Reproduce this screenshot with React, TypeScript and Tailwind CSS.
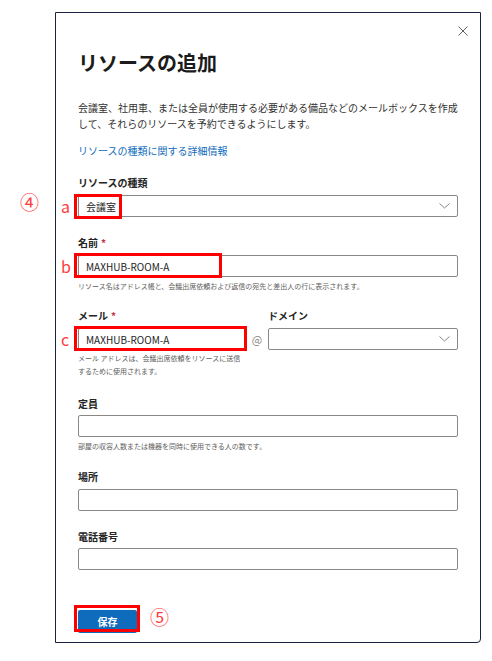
const jp = "font-['Noto_Sans_CJK_JP','Noto_Sans',sans-serif]";

function Chevron() {
  return (
    <svg width="11" height="6" viewBox="0 0 11 6" className="text-[#8a8886]">
      <path d="M0.5 0.5 L5.5 5 L10.5 0.5" fill="none" stroke="currentColor" strokeWidth="1" />
    </svg>
  );
}

function Mark({ className }: { className: string }) {
  // red annotation frame drawn over a field
  return <div className={`absolute border-[3px] border-[#ff0000] pointer-events-none ${className}`} />;
}

function Letter({ ch }: { ch: string }) {
  return <div className="absolute -left-[17px] top-[1px] text-[16px] leading-[20px] text-[#ff3b3b]">{ch}</div>;
}

function Label({ text, required, className = "" }: { text: string; required?: boolean; className?: string }) {
  return (
    <div className={`h-[16px] leading-[16px] text-[10px] font-semibold text-[#242424] ${className}`}>
      {text}
      {required && <span className="text-[#c4314b] ml-[3px]">*</span>}
    </div>
  );
}

function Box({ children, className = "" }: { children?: React.ReactNode; className?: string }) {
  return (
    <div className={`h-[22px] border border-[#8a8886] rounded-[2px] bg-white flex items-center px-[7px] text-[10px] text-[#242424] ${className}`}>
      {children}
    </div>
  );
}

export default function App() {
  return (
    <div className={`relative w-[492px] h-[661px] bg-white pt-[12px] pl-[55px] ${jp}`}>
      {/* step numbers written beside the panel */}
      <div className="absolute left-[20px] top-[192px] text-[19px] leading-none text-[#ff3b3b]">④</div>
      <div className="absolute left-[150px] top-[607px] text-[19px] leading-none text-[#ff3b3b]">⑤</div>

      <div className="w-[426px] h-[631px] border border-[#1b2340] rounded-br-[4px] bg-white px-[22px]">
        <div className="h-[36px] flex items-center justify-end -mr-[10px]">
          <svg width="10" height="10" viewBox="0 0 10 10" className="text-[#605e5c]">
            <path d="M0.5 0.5 L9.5 9.5 M9.5 0.5 L0.5 9.5" stroke="currentColor" strokeWidth="1" />
          </svg>
        </div>

        <h1 className="h-[28px] leading-[28px] text-[20px] font-bold text-[#1b1b1b]">リソースの追加</h1>

        <p className="mt-[23px] text-[10px] leading-[16px] text-[#323130]">
          会議室、社用車、または全員が使用する必要がある備品などのメールボックスを作成して、それらのリソースを予約できるようにします。
        </p>

        <div className="mt-[11px] h-[16px] leading-[16px] text-[10px] text-[#0f6cbd]">リソースの種類に関する詳細情報</div>

        <Label text="リソースの種類" className="mt-[16px]" />
        <div className="relative mt-[4px]">
          <Box className="justify-between">
            <span>会議室</span>
            <Chevron />
          </Box>
          <Mark className="-left-[4px] -top-[1px] w-[48px] h-[25px]" />
          <Letter ch="a" />
        </div>

        <Label text="名前" required className="mt-[18px]" />
        <div className="relative mt-[4px]">
          <Box>MAXHUB-ROOM-A</Box>
          <Mark className="-left-[4px] -top-[2px] w-[148px] h-[25px]" />
          <Letter ch="b" />
        </div>
        <div className="mt-[3px] h-[12px] leading-[12px] text-[7px] text-[#605e5c]">
          リソース名はアドレス帳と、会議出席依頼および返信の宛先と差出人の行に表示されます。
        </div>

        <div className="mt-[16px] flex">
          <Label text="メール" required className="w-[190px]" />
          <Label text="ドメイン" />
        </div>
        <div className="mt-[4px] flex items-center">
          <div className="relative w-[168px]">
            <Box>MAXHUB-ROOM-A</Box>
            <Mark className="-left-[4px] -top-[2px] w-[173px] h-[25px]" />
            <Letter ch="c" />
          </div>
          <div className="w-[22px] text-center text-[11px] text-[#8a8886]">@</div>
          <Box className="flex-1 justify-end">
            <Chevron />
          </Box>
        </div>
        <div className="mt-[2px] w-[166px] text-[7px] leading-[13px] text-[#605e5c]">
          メール アドレスは、会議出席依頼をリソースに送信するために使用されます。
        </div>

        <Label text="定員" className="mt-[18px]" />
        <Box className="mt-[3px]" />
        <div className="mt-[3px] h-[12px] leading-[12px] text-[7px] text-[#605e5c]">
          部屋の収容人数または機器を同時に使用できる人の数です。
        </div>

        <Label text="場所" className="mt-[17px]" />
        <Box className="mt-[4px]" />

        <Label text="電話番号" className="mt-[18px]" />
        <Box className="mt-[3px]" />

        <div className="relative mt-[37px] w-[59px]">
          <button className="w-[59px] h-[23px] bg-[#0f6cbd] rounded-[2px] text-white text-[10px] font-bold">保存</button>
          <Mark className="-left-[4px] -top-[2px] w-[66px] h-[27px]" />
        </div>
      </div>
    </div>
  );
}
